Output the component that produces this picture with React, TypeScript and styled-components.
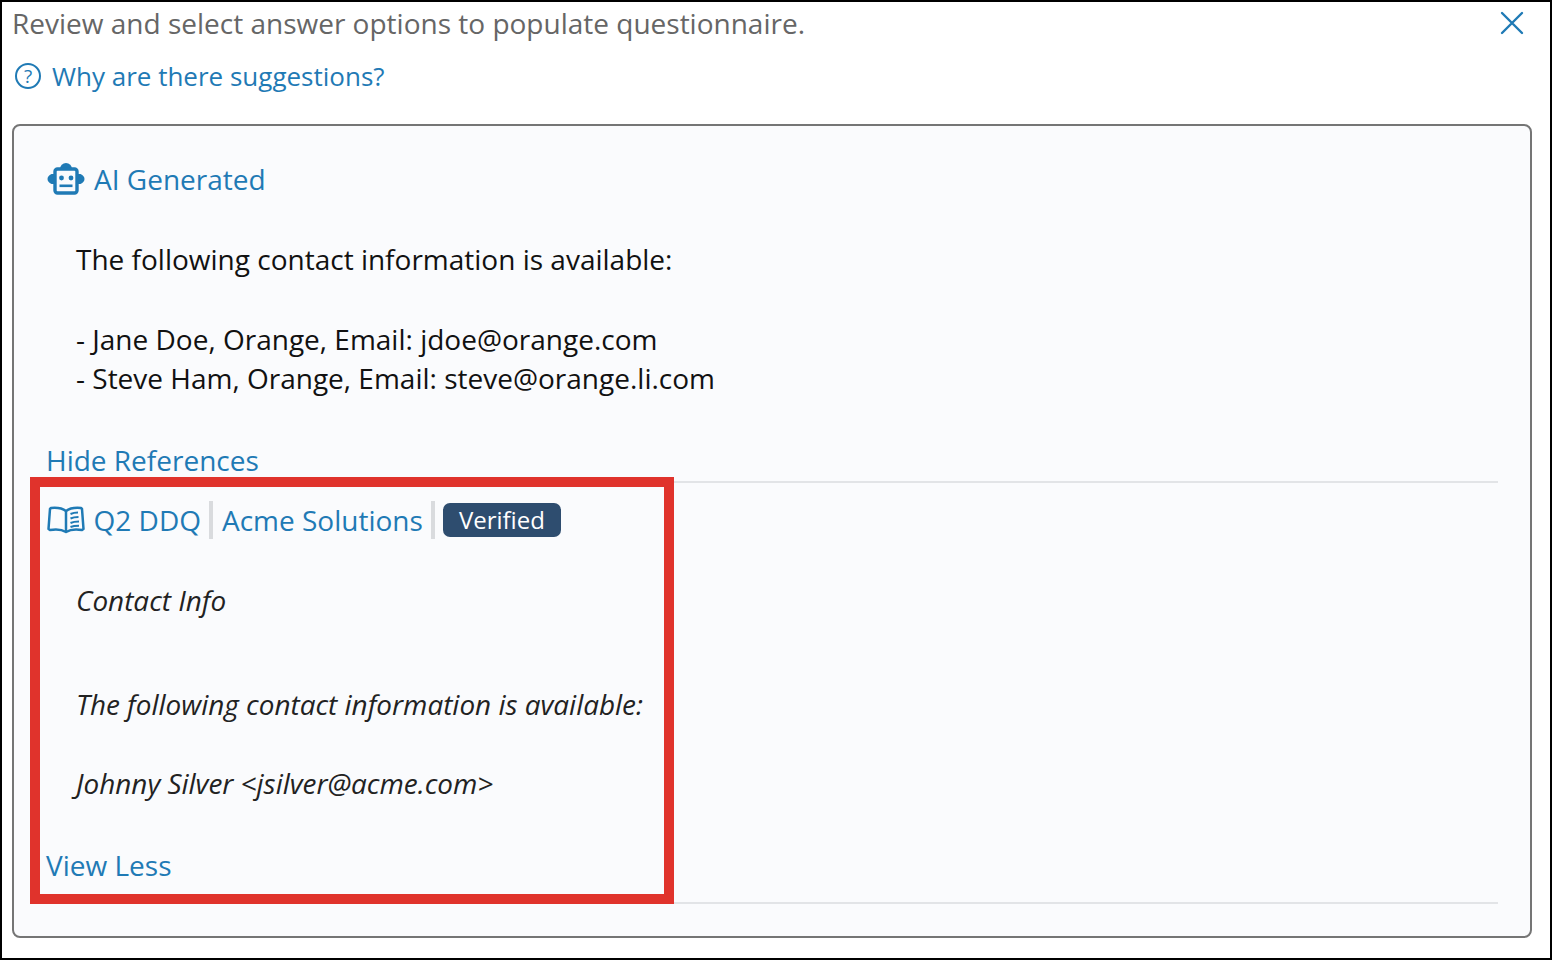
import React from 'react'
import styled, { createGlobalStyle } from 'styled-components'

const BLUE = '#1f7ab5'

const GlobalStyle = createGlobalStyle`
  html, body {
    margin: 0;
    padding: 0;
    background: #fff;
  }
  body {
    font-family: 'Open Sans', 'Liberation Sans', sans-serif;
    overflow: hidden;
  }
`

const BotIcon = () => (
  <svg width="38" height="32" viewBox="0 1 38 32" aria-hidden="true">
    <path d="M13 7 A6 6 0 0 1 25 7 Z" fill={BLUE} />
    <path d="M8 12 H4.500 Q0.500 14 0.500 17 Q0.500 20 4.500 22 H8 Z" fill={BLUE} />
    <path d="M30 12 H33.500 Q37.500 14 37.500 17 Q37.500 20 33.500 22 H30 Z" fill={BLUE} />
    <rect x="8" y="7" width="22" height="24" rx="2.500" fill="#fafbfd" stroke={BLUE} strokeWidth="3.400" />
    <circle cx="14.500" cy="16" r="2.400" fill={BLUE} />
    <circle cx="24" cy="16" r="2.400" fill={BLUE} />
    <rect x="12.500" y="22.500" width="13" height="2.600" fill={BLUE} />
  </svg>
)

const BookIcon = () => (
  <svg width="38" height="28" viewBox="0 0 38 28" fill="none" stroke={BLUE} strokeWidth="2.500" aria-hidden="true">
    <path d="M19 5 C15 2 9 1.500 4 2 L3 3 L1.500 23 L3 24 C9 23 15 23.500 19 26 C23 23.500 29 23 35 24 L36.500 23 L35 3 L34 2 C29 1.500 23 2 19 5 Z" strokeLinejoin="round" />
    <path d="M19 5 V26" />
    <path d="M23.500 8 C26 6.800 28.500 6.500 31 6.500 M23.500 12.500 C26 11.300 28.500 11 31.500 11 M23.500 17 C26 15.800 28.500 15.500 32 15.500 M23.500 21 C26 20 28.500 19.800 32 19.800" strokeWidth="2" />
  </svg>
)

const App: React.FC = () => {
  return (
    <>
      <GlobalStyle />
      <Frame>
        <TopRow>
          <Intro>Review and select answer options to populate questionnaire.</Intro>
          <CloseButton aria-label="Close">
            <svg width="24" height="24" viewBox="0 0 24 24" stroke={BLUE} strokeWidth="2.400" strokeLinecap="round">
              <path d="M2 2 L22 22 M22 2 L2 22" />
            </svg>
          </CloseButton>
        </TopRow>

        <HelpLink>
          <HelpCircle>?</HelpCircle>
          Why are there suggestions?
        </HelpLink>

        <Panel>
          <SourceRow>
            <BotIcon />
            <SourceLink>AI Generated</SourceLink>
          </SourceRow>

          <Answer>
            <p>The following contact information is available:</p>
            <p>
              - Jane Doe, Orange, Email: jdoe@orange.com
              <br />- Steve Ham, Orange, Email: steve@orange.li.com
            </p>
          </Answer>

          <ToggleLink>Hide References</ToggleLink>

          <Reference>
            <RefHeader>
              <BookIcon />
              <SourceLink>Q2 DDQ</SourceLink>
              <Divider />
              <SourceLink>Acme Solutions</SourceLink>
              <Divider />
              <Badge>Verified</Badge>
            </RefHeader>

            <RefBody>
              <RefTitle>Contact Info</RefTitle>
              <RefLine>The following contact information is available:</RefLine>
              <RefLast>Johnny Silver &lt;jsilver@acme.com&gt;</RefLast>
            </RefBody>

            <ViewLess>View Less</ViewLess>
          </Reference>

          <Highlight />
        </Panel>
      </Frame>
    </>
  )
}

export default App

const Frame = styled.div`
  box-sizing: border-box;
  width: 1552px;
  height: 960px;
  border: 2px solid #000;
  padding: 0 18px 20px 10px;
  display: flex;
  flex-direction: column;
  background: #fff;
`

const TopRow = styled.div`
  display: flex;
  justify-content: space-between;
  height: 44px;
`

const Intro = styled.div`
  font-size: 28px;
  line-height: 42px;
  color: #666;
`

const CloseButton = styled.button`
  border: 0;
  padding: 0;
  background: none;
  width: 24px;
  height: 24px;
  margin: 9px 8px 0 0;
`

const HelpLink = styled.a`
  display: flex;
  align-items: center;
  gap: 11px;
  margin: 10px 0 0 3px;
  height: 40px;
  font-size: 26px;
  color: ${BLUE};
`

const HelpCircle = styled.span`
  box-sizing: border-box;
  width: 26px;
  height: 26px;
  border: 2px solid ${BLUE};
  border-radius: 50%;
  display: flex;
  align-items: center;
  justify-content: center;
  font-size: 19px;
  line-height: 1;
`

const Panel = styled.section`
  position: relative;
  box-sizing: border-box;
  margin-top: 28px;
  flex: 1;
  border: 2px solid #757575;
  border-radius: 8px;
  background: #fafbfd;
  padding: 28px 32px 0 33px;
`

const SourceRow = styled.div`
  display: flex;
  align-items: center;
  gap: 9px;
  height: 50px;
`

const SourceLink = styled.span`
  font-size: 28px;
  line-height: 40px;
  color: ${BLUE};
`

const Answer = styled.div`
  margin: 0 0 41px 29px;
  padding-top: 36px;
  font-size: 28px;
  line-height: 39.500px;
  color: #111;

  p {
    margin: 0 0 40px;
  }
`

const ToggleLink = styled.a`
  display: block;
  margin-left: -1px;
  font-size: 28px;
  line-height: 40px;
  color: ${BLUE};
`

const Reference = styled.div`
  border-top: 2px solid #e2e4e7;
  border-bottom: 2px solid #e2e4e7;
  height: 423px;
  box-sizing: border-box;
  margin-top: 1px;
`

const RefHeader = styled.div`
  display: flex;
  align-items: center;
  gap: 8.500px;
  height: 38px;
  margin-top: 18px;
`

const Divider = styled.span`
  flex: none;
  width: 4px;
  height: 38px;
  background: #d9dbde;
`

const Badge = styled.span`
  background: #2e4d6f;
  color: #fff;
  border-radius: 7px;
  font-size: 24px;
  line-height: 34px;
  padding: 0 16px;
  margin-left: -1px;
`

const RefBody = styled.div`
  margin: 41px 0 0 29px;
  font-size: 27.900px;
  font-style: italic;
  color: #222;
`

const RefTitle = styled.div`
  line-height: 40px;
`

const RefLine = styled.div`
  line-height: 40px;
  margin-top: 64px;
`

const RefLast = styled.div`
  line-height: 40px;
  margin-top: 39px;
`

const ViewLess = styled.a`
  display: block;
  margin: 42px 0 0 -1px;
  font-size: 28px;
  line-height: 40px;
  color: ${BLUE};
`

const Highlight = styled.div`
  position: absolute;
  left: 16px;
  top: 351px;
  width: 644px;
  height: 427px;
  box-sizing: border-box;
  border: 10px solid #e0332c;
  pointer-events: none;
`
